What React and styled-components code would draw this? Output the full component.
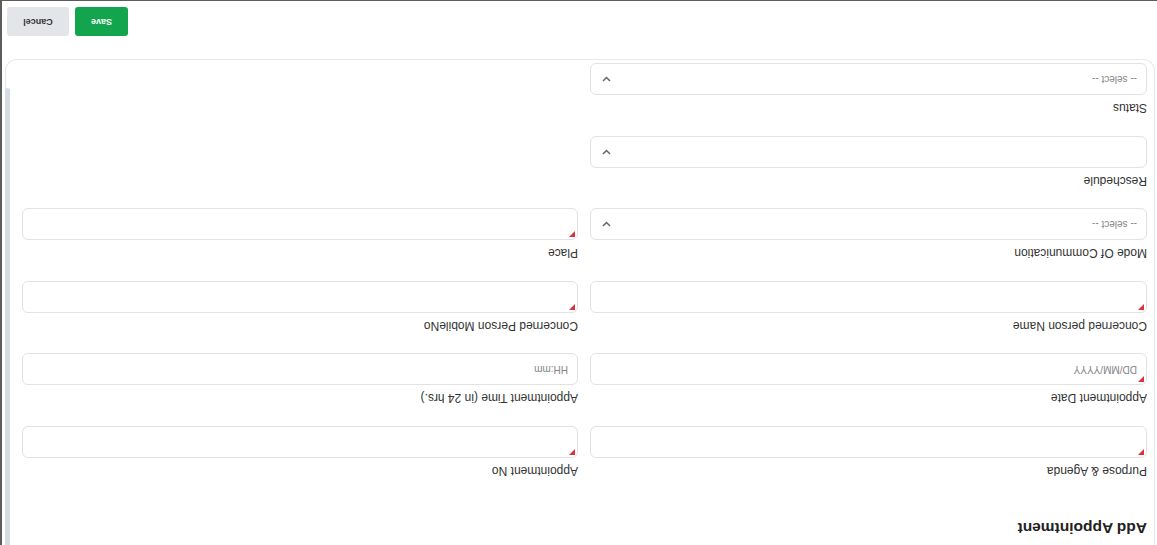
import React from "react";
import styled, { createGlobalStyle } from "styled-components";

const GlobalStyle = createGlobalStyle`
  html, body { margin: 0; padding: 0; overflow: hidden; background: #fff; }
  body { font-family: "Liberation Sans", Arial, sans-serif; color: #333; }
  * { box-sizing: border-box; }
`;

const Frame = styled.div`
  position: relative;
  width: 1157px;
  height: 545px;
  overflow: hidden;
  background: #fff;
  border-right: 2px solid #5c5c5c;
  border-bottom: 1px solid #5c5c5c;
  display: flex;
  flex-direction: column;
  transform: rotate(180deg);
`;

const Card = styled.div`
  margin: 0 3px 0 2px;
  border: 1px solid #e8e8e8;
  border-top: none;
  border-radius: 0 0 12px 12px;
  padding: 8px 16px 3px 7px;
`;

const Title = styled.h2`
  margin: 0 0 41px;
  font-size: 15.5px;
  line-height: 18px;
  font-weight: 700;
  color: #222;
`;

const Grid = styled.div`
  display: grid;
  grid-template-columns: 557px 556px;
  column-gap: 12px;
  row-gap: 20.6px;
`;

const Field = styled.div`
  display: flex;
  flex-direction: column;
  gap: 6px;
`;

const Label = styled.label`
  font-size: 12px;
  line-height: 14px;
  color: #333;
`;

const Box = styled.div`
  position: relative;
  height: 32px;
  border: 1px solid #e2e2e2;
  border-radius: 6px;
  background: #fff;
  display: flex;
  align-items: center;
`;

const TextInput = styled.input`
  width: 100%;
  height: 100%;
  border: none;
  outline: none;
  background: transparent;
  padding: 0 9px;
  border-radius: 6px;
  font-family: "Liberation Sans", Arial, sans-serif;
  font-size: 10px;
  color: #333;
  &::placeholder { color: #858585; }
`;

const SelectText = styled.span`
  flex: 1;
  padding: 0 9px;
  font-size: 10px;
  color: #858585;
`;

const Chevron = styled.svg`
  width: 9px;
  height: 6px;
  margin-right: 11px;
  flex: none;
`;

const Required = styled.span`
  position: absolute;
  top: 2px;
  left: 2px;
  width: 0;
  height: 0;
  border-top: 6px solid #d8323c;
  border-right: 6px solid transparent;
`;

const Actions = styled.div`
  display: flex;
  justify-content: flex-end;
  gap: 6px;
  margin-top: 23px;
  padding-right: 5px;
`;

const Button = styled.button`
  height: 29px;
  width: ${(p) => p.$w}px;
  border: none;
  border-radius: 3px;
  font-family: "Liberation Sans", Arial, sans-serif;
  font-size: 9px;
  font-weight: 700;
  background: ${(p) => (p.$primary ? "#13a54e" : "#e3e5e9")};
  color: ${(p) => (p.$primary ? "#fff" : "#333")};
  cursor: pointer;
`;

const ScrollThumb = styled.div`
  position: absolute;
  top: 0;
  right: 3px;
  width: 5px;
  height: 457px;
  background: #d7dbe2;
  border-radius: 0 0 3px 3px;
`;

const fields = [
  { label: "Purpose & Agenda", required: true },
  { label: "Appointment No", required: true },
  { label: "Appointment Date", required: true, placeholder: "DD/MM/YYYY" },
  { label: "Appointment Time (in 24 hrs.)", placeholder: "HH:mm" },
  { label: "Concerned person Name", required: true },
  { label: "Concerned Person MobileNo", required: true },
  { label: "Mode Of Communication", select: "-- select --" },
  { label: "Place", required: true },
  { label: "Reschedule", select: "" },
  null,
  { label: "Status", select: "-- select --" },
];

function FormField({ f }) {
  if (!f) return <div />;
  return (
    <Field>
      <Label>{f.label}</Label>
      <Box>
        {f.select !== undefined ? (
          <>
            <SelectText>{f.select}</SelectText>
            <Chevron viewBox="0 0 9 6">
              <polyline points="1,1 4.5,4.5 8,1" fill="none" stroke="#666" strokeWidth="1.5" />
            </Chevron>
          </>
        ) : (
          <TextInput placeholder={f.placeholder || ""} />
        )}
        {f.required && <Required />}
      </Box>
    </Field>
  );
}

export default function App() {
  return (
    <>
      <GlobalStyle />
      <Frame>
        <Card>
          <Title>Add Appointment</Title>
          <Grid>
            {fields.map((f, i) => (
              <FormField key={i} f={f} />
            ))}
          </Grid>
        </Card>
        <Actions>
          <Button $primary $w={53}>Save</Button>
          <Button $w={62}>Cancel</Button>
        </Actions>
        <ScrollThumb />
      </Frame>
    </>
  );
}
